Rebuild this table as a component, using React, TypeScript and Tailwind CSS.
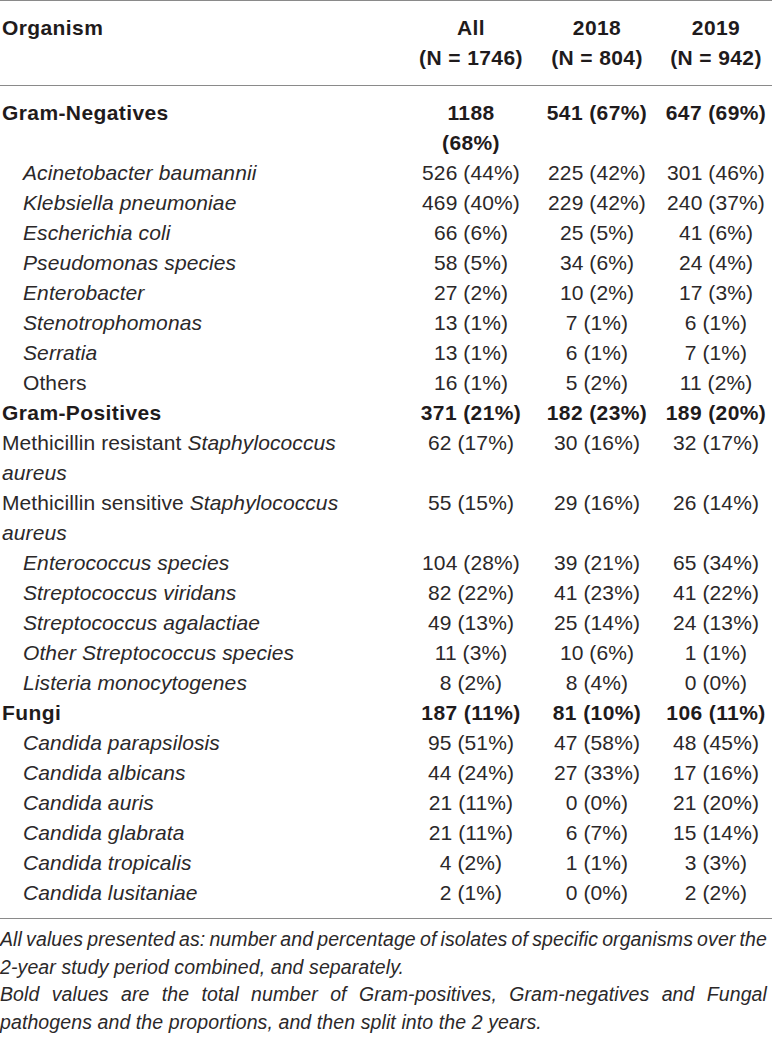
import React from "react";

type Row = {
  label: React.ReactNode;
  kind: "group" | "sp" | "plain" | "flush";
  vals: React.ReactNode[];
};

const rows: Row[] = [
  { label: "Gram-Negatives", kind: "group", vals: [<>1188<br />(68%)</>, "541 (67%)", "647 (69%)"] },
  { label: "Acinetobacter baumannii", kind: "sp", vals: ["526 (44%)", "225 (42%)", "301 (46%)"] },
  { label: "Klebsiella pneumoniae", kind: "sp", vals: ["469 (40%)", "229 (42%)", "240 (37%)"] },
  { label: "Escherichia coli", kind: "sp", vals: ["66 (6%)", "25 (5%)", "41 (6%)"] },
  { label: "Pseudomonas species", kind: "sp", vals: ["58 (5%)", "34 (6%)", "24 (4%)"] },
  { label: "Enterobacter", kind: "sp", vals: ["27 (2%)", "10 (2%)", "17 (3%)"] },
  { label: "Stenotrophomonas", kind: "sp", vals: ["13 (1%)", "7 (1%)", "6 (1%)"] },
  { label: "Serratia", kind: "sp", vals: ["13 (1%)", "6 (1%)", "7 (1%)"] },
  { label: "Others", kind: "plain", vals: ["16 (1%)", "5 (2%)", "11 (2%)"] },
  { label: "Gram-Positives", kind: "group", vals: ["371 (21%)", "182 (23%)", "189 (20%)"] },
  {
    label: <>Methicillin resistant <i>Staphylococcus</i><br /><i>aureus</i></>,
    kind: "flush",
    vals: ["62 (17%)", "30 (16%)", "32 (17%)"],
  },
  {
    label: <>Methicillin sensitive <i>Staphylococcus</i><br /><i>aureus</i></>,
    kind: "flush",
    vals: ["55 (15%)", "29 (16%)", "26 (14%)"],
  },
  { label: "Enterococcus species", kind: "sp", vals: ["104 (28%)", "39 (21%)", "65 (34%)"] },
  { label: "Streptococcus viridans", kind: "sp", vals: ["82 (22%)", "41 (23%)", "41 (22%)"] },
  { label: "Streptococcus agalactiae", kind: "sp", vals: ["49 (13%)", "25 (14%)", "24 (13%)"] },
  { label: "Other Streptococcus species", kind: "sp", vals: ["11 (3%)", "10 (6%)", "1 (1%)"] },
  { label: "Listeria monocytogenes", kind: "sp", vals: ["8 (2%)", "8 (4%)", "0 (0%)"] },
  { label: "Fungi", kind: "group", vals: ["187 (11%)", "81 (10%)", "106 (11%)"] },
  { label: "Candida parapsilosis", kind: "sp", vals: ["95 (51%)", "47 (58%)", "48 (45%)"] },
  { label: "Candida albicans", kind: "sp", vals: ["44 (24%)", "27 (33%)", "17 (16%)"] },
  { label: "Candida auris", kind: "sp", vals: ["21 (11%)", "0 (0%)", "21 (20%)"] },
  { label: "Candida glabrata", kind: "sp", vals: ["21 (11%)", "6 (7%)", "15 (14%)"] },
  { label: "Candida tropicalis", kind: "sp", vals: ["4 (2%)", "1 (1%)", "3 (3%)"] },
  { label: "Candida lusitaniae", kind: "sp", vals: ["2 (1%)", "0 (0%)", "2 (2%)"] },
];

function labelClass(kind: Row["kind"]) {
  switch (kind) {
    case "group":
      return "pl-[2px] font-bold tracking-[0.4px] text-[#1f1b1c]";
    case "sp":
      return "pl-[23px] italic";
    case "plain":
      return "pl-[23px]";
    default:
      return "pl-[2px]";
  }
}

export default function App() {
  return (
    <div className="w-[772px] bg-white text-[#2b2829] font-['Liberation_Sans',Arial,sans-serif] text-[21px] leading-[30px] tracking-[0.1px]">
      <div className="border-t border-[#8a8a8a]" />
      <div className="grid grid-cols-[408px_126px_126px_112px] pt-[12px] pb-[12px] font-bold tracking-[0.4px] text-[#1f1b1c]">
        <div className="pl-[2px]">Organism</div>
        <div className="text-center">All<br />(N = 1746)</div>
        <div className="text-center">2018<br />(N = 804)</div>
        <div className="text-center">2019<br />(N = 942)</div>
      </div>
      <div className="border-t border-[#8a8a8a]" />
      <div className="flex flex-col pt-[12px] pb-[10px]">
        {rows.map((r, i) => (
          <div key={i} className="grid grid-cols-[408px_126px_126px_112px]">
            <div className={labelClass(r.kind)}>{r.label}</div>
            {r.vals.map((v, j) => (
              <div
                key={j}
                className={
                  r.kind === "group"
                    ? "text-center font-bold tracking-[0.4px] text-[#1f1b1c]"
                    : "text-center"
                }
              >
                {v}
              </div>
            ))}
          </div>
        ))}
      </div>
      <div className="border-t border-[#8a8a8a]" />
      <div className="w-[767px] pt-[7px] italic text-[19.5px] leading-[27.7px] tracking-[0.1px]">
        <p>
          <span className="block text-justify [text-align-last:justify] [word-spacing:-2px]">
            All values presented as: number and percentage of isolates of specific organisms over the
          </span>
          <span className="block">2-year study period combined, and separately.</span>
        </p>
        <p>
          <span className="block text-justify [text-align-last:justify]">
            Bold values are the total number of Gram-positives, Gram-negatives and Fungal
          </span>
          <span className="block">pathogens and the proportions, and then split into the 2 years.</span>
        </p>
      </div>
    </div>
  );
}
